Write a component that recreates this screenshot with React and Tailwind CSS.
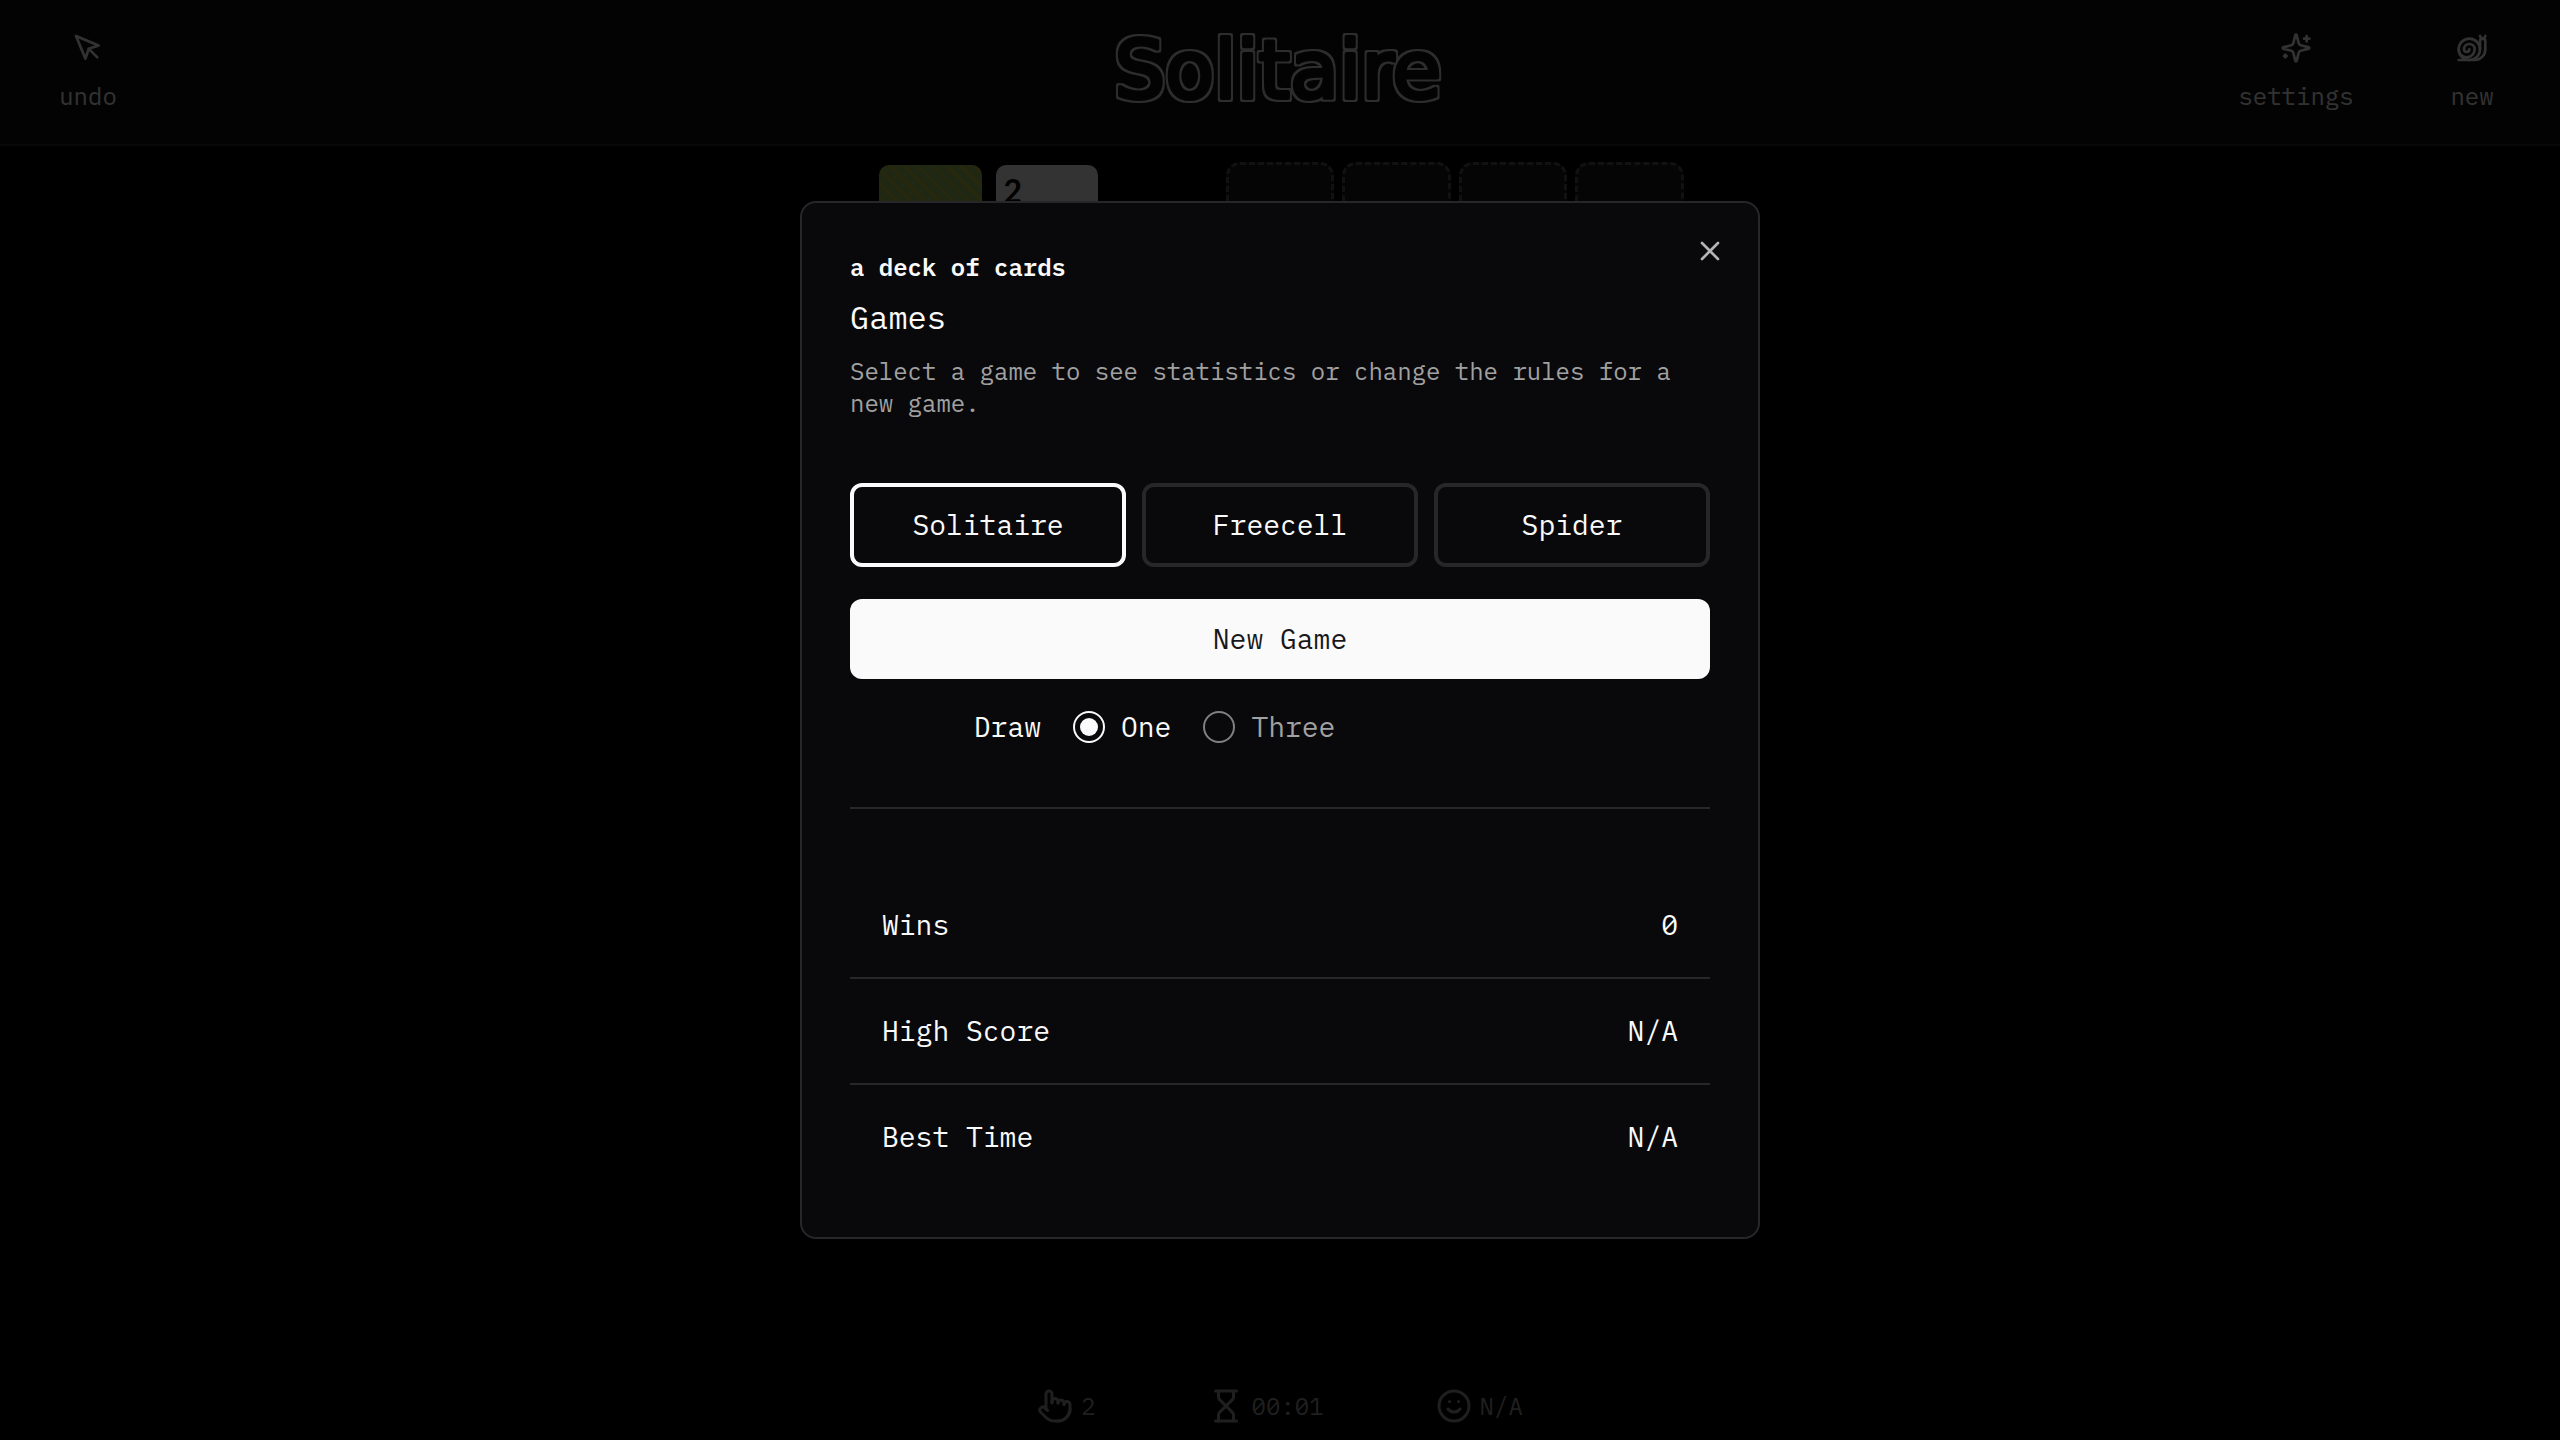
import { useState } from "react";
import { LuSparkles, LuSnail, LuHourglass, LuSmile, LuPointer, LuX } from "react-icons/lu";

function CursorIcon() {
  return (
    <svg className="size-8" viewBox="0 0 24 24" fill="none" stroke="currentColor" strokeWidth="2" strokeLinecap="round" strokeLinejoin="round" aria-hidden="true">
      <path d="m3 3 7.07 16.97 2.51-7.39 7.39-2.51L3 3z" />
      <path d="m13 13 6 6" />
    </svg>
  );
}

// Hollow lettering: the text is painted in the header colour, with a light rim grown around it.
function Logo() {
  return (
    <svg className="h-32 w-[400px]" viewBox="0 0 400 128">
      <filter id="rim" x="-5%" y="-20%" width="110%" height="140%" colorInterpolationFilters="sRGB">
        <feMorphology in="SourceAlpha" operator="dilate" radius="2" result="grown" />
        <feFlood floodColor="#e0e0e0" />
        <feComposite in2="grown" operator="in" />
        <feMerge>
          <feMergeNode />
          <feMergeNode in="SourceGraphic" />
        </feMerge>
      </filter>
      <text
        x="198"
        y="90"
        textAnchor="middle"
        filter="url(#rim)"
        fill="#0f0f0f"
        stroke="#0f0f0f"
        strokeWidth="4"
        strokeLinejoin="round"
        className="font-['DejaVu_Sans'] text-[80px]"
      >
        Solitaire
      </text>
    </svg>
  );
}

function Header() {
  return (
    <header className="grid grid-cols-[1fr_auto_1fr] items-center border-b-2 border-[#262626] bg-[#0f0f0f] px-8">
      <div className="flex">
        <button className="flex h-36 w-28 flex-col items-center justify-center gap-4">
          <CursorIcon />
          <span>undo</span>
        </button>
      </div>
      <h1>
        <Logo />
      </h1>
      <div className="flex justify-end gap-8">
        <button className="flex h-36 w-44 flex-col items-center justify-center gap-4">
          <LuSparkles className="size-8" />
          <span>settings</span>
        </button>
        <button className="flex h-36 w-28 flex-col items-center justify-center gap-4">
          <LuSnail className="size-8" />
          <span>new</span>
        </button>
      </div>
    </header>
  );
}

function EmptyPile() {
  return <div className="h-40 rounded-[14px] border-[3px] border-dashed border-[#585858] bg-[#191919]" />;
}

function Board() {
  return (
    <main className="mx-auto grid w-full max-w-[808px] grow grid-cols-7 content-start gap-2 pt-4">
      <div className="p-[3px]">
        <div className="h-36 rounded-[10px] bg-[repeating-linear-gradient(45deg,#a0c35a_0px,#a0c35a_8px,#d2c832_8px,#d2c832_10px)]" />
      </div>
      <div className="p-[3px]">
        <div className="h-36 rounded-[10px] bg-white px-2 pt-3 font-[Lato] text-[32px] leading-7 font-bold text-black">2</div>
      </div>
      <div />
      <EmptyPile />
      <EmptyPile />
      <EmptyPile />
      <EmptyPile />
    </main>
  );
}

function Footer() {
  return (
    <footer className="flex justify-center gap-28 py-4 text-[#999999]">
      <div className="flex items-center gap-2"><LuPointer className="size-9" /><span>2</span></div>
      <div className="flex items-center gap-2"><LuHourglass className="size-9" /><span>00:01</span></div>
      <div className="flex items-center gap-2"><LuSmile className="size-9" /><span>N/A</span></div>
    </footer>
  );
}

const games = ["Solitaire", "Freecell", "Spider"];
const stats = [["Wins", "0"], ["High Score", "N/A"], ["Best Time", "N/A"]];

function DrawOption({ label, checked, onChange }) {
  return (
    <label className={checked ? "flex items-center gap-4" : "flex items-center gap-4 text-[#a1a1a1]"}>
      <input
        type="radio"
        name="draw"
        checked={checked}
        onChange={onChange}
        className="grid size-8 appearance-none place-items-center rounded-full border-2 border-[#808080] before:size-[18px] before:rounded-full checked:border-[#fafafa] checked:before:bg-[#fafafa]"
      />
      {label}
    </label>
  );
}

function GamesDialog() {
  const [game, setGame] = useState("Solitaire");
  const [draw, setDraw] = useState("One");
  return (
    <div className="fixed inset-0 flex items-center justify-center bg-black/80">
      <section role="dialog" aria-label="Games" className="relative w-full max-w-[960px] rounded-2xl border-2 border-[#27272a] bg-[#09090b] p-12 text-[28px] leading-10">
        <button aria-label="Close" className="absolute top-8 right-8 text-[#b4b4b4]">
          <LuX className="size-8" />
        </button>
        <p className="text-[24px] leading-8 font-semibold">a deck of cards</p>
        <h2 className="mt-[14px] mb-[18px] text-[32px] leading-10">Games</h2>
        <p className="text-[24px] leading-8 text-[#a1a1a1]">Select a game to see statistics or change the rules for a new game.</p>
        <div className="mt-16 grid grid-cols-3 gap-4">
          {games.map((name) => (
            <button
              key={name}
              onClick={() => setGame(name)}
              className={name === game ? "rounded-xl border-4 border-[#fafafa] py-[18px]" : "rounded-xl border-4 border-[#27272a] py-[18px]"}
            >
              {name}
            </button>
          ))}
        </div>
        <button className="mt-8 w-full rounded-xl bg-[#fafafa] py-5 text-[#18181b]">New Game</button>
        <div className="mt-8 grid grid-cols-4 items-center gap-8 leading-8">
          <span className="text-right">Draw</span>
          <div className="col-span-3 flex gap-8">
            <DrawOption label="One" checked={draw === "One"} onChange={() => setDraw("One")} />
            <DrawOption label="Three" checked={draw === "Three"} onChange={() => setDraw("Three")} />
          </div>
        </div>
        <hr className="my-16 border-t-2 border-[#27272a]" />
        <table className="w-full border-collapse">
          <tbody>
            {stats.map(([name, value]) => (
              <tr key={name} className="border-b-2 border-[#27272a] last:border-b-0">
                <th scope="row" className="p-8 text-left font-normal">{name}</th>
                <td className="p-8 text-right">{value}</td>
              </tr>
            ))}
          </tbody>
        </table>
      </section>
    </div>
  );
}

export default function App() {
  return (
    <div className="flex min-h-screen flex-col bg-black font-['IBM_Plex_Mono','Liberation_Mono',monospace] text-[24px] leading-8 text-[#fafafa] [font-feature-settings:'zero']">
      <Header />
      <Board />
      <Footer />
      <GamesDialog />
    </div>
  );
}
